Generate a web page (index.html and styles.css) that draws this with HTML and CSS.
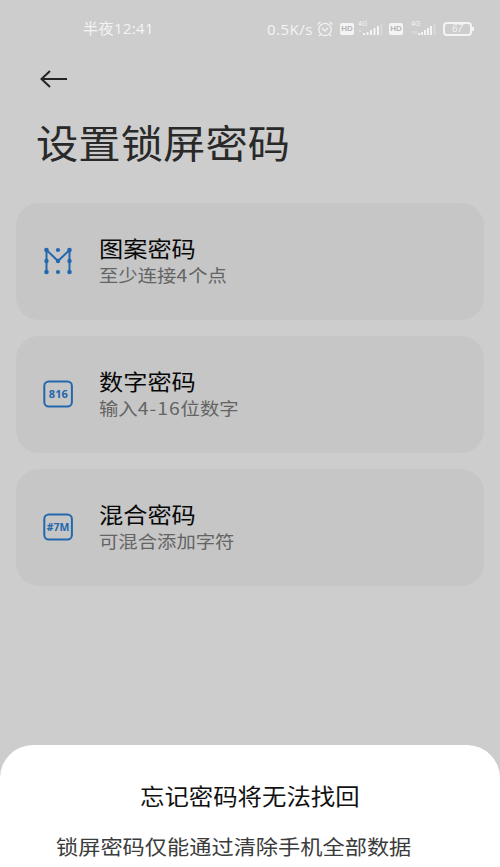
FILE: index.html
```html
<!DOCTYPE html>
<html lang="zh-CN">
<head>
<meta charset="utf-8">
<title>设置锁屏密码</title>
<link rel="stylesheet" href="styles.css">
</head>
<body>
<div class="screen">
  <header class="status">
    <span class="clock">半夜<span class="time">12:41</span></span>
    <div class="indicators">
      <span class="speed">0.5K/s</span>
      <svg class="alarm" width="18" height="18" viewBox="0 0 18 18"><circle cx="9" cy="9.5" r="6.2"/><path d="M1.5 4.5 4.5 2M16.500 4.500 13.500 2M4.500 14.500 3 16M13.500 14.500 15 16M6 8 9 11 12 8"/></svg>
      <span class="hd">HD</span>
      <svg class="signal" width="25" height="18" viewBox="0 0 25 18"><text x="0" y="6">4G</text><path d="M6 13v2M9.500 12v3M13 10v5M16.500 8v7M20 6v9"/><path class="faint" d="M2 10v2M23.500 4v11"/></svg>
      <span class="hd hd-second">HD</span>
      <svg class="signal" width="25" height="18" viewBox="0 0 25 18"><text x="0" y="6">4G</text><path d="M8 13v2M11 12v3M14 10v5M17 8v7M20 6v9"/><path class="faint" d="M2 11v3M5 11v3M23.500 4v11"/></svg>
      <span class="battery">67</span>
    </div>
  </header>
  <svg class="back" width="28" height="20" viewBox="0 0 28 20"><path d="M27 10H2M10 2 1.500 10 10 18"/></svg>
  <h1><span class="wide">设置锁屏密码</span></h1>
  <main class="options">
    <section class="card">
      <svg class="icon" width="30" height="30" viewBox="0 0 30 30"><path d="M3.500 26V4L15 15 26.500 4v22"/><g class="dots"><circle cx="3.500" cy="4" r="2.300"/><circle cx="15" cy="4" r="2.100"/><circle cx="26.500" cy="4" r="2.300"/><circle cx="3.500" cy="15" r="2.200"/><circle cx="15" cy="15" r="2.200"/><circle cx="26.500" cy="15" r="2.200"/><circle cx="3.500" cy="26" r="2.300"/><circle cx="15" cy="26" r="2.100"/><circle cx="26.500" cy="26" r="2.300"/></g></svg>
      <div class="copy"><h2><span class="wide">图案密码</span></h2><p><span class="wide">至少连接<span class="digits">4</span>个点</span></p></div>
    </section>
    <section class="card">
      <svg class="icon" width="30" height="30" viewBox="0 0 30 30"><rect x="1.300" y="2.500" width="27.600" height="25" rx="4.500"/><text x="15.300" y="19" textLength="19" lengthAdjust="spacingAndGlyphs">816</text></svg>
      <div class="copy"><h2><span class="wide">数字密码</span></h2><p><span class="wide">输入<span class="digits">4-16</span>位数字</span></p></div>
    </section>
    <section class="card">
      <svg class="icon" width="30" height="30" viewBox="0 0 30 30"><rect x="1.300" y="2.500" width="27.600" height="25" rx="4.500"/><text x="15" y="19" textLength="22.500" lengthAdjust="spacingAndGlyphs">#7M</text></svg>
      <div class="copy"><h2><span class="wide">混合密码</span></h2><p><span class="wide">可混合添加字符</span></p></div>
    </section>
  </main>
  <section class="sheet">
    <h2><span class="wide">忘记密码将无法找回</span></h2>
    <p><span class="wide">锁屏密码仅能通过清除手机全部数据</span></p>
  </section>
</div>
</body>
</html>
```
FILE: styles.css
```css
* { box-sizing: border-box; }
body, h1, h2, p { margin: 0; font-weight: 400; }
body { overflow: hidden; font-family: "Noto Sans CJK SC", sans-serif; }
.screen { width: 500px; height: 867px; background: #cdcdcd; display: flex; flex-direction: column; overflow: hidden; }
.wide { display: inline-block; white-space: nowrap; transform: scaleX(1.1); transform-origin: left center; }
.digits { letter-spacing: .9px; }
.status { flex: none; height: 58px; padding: 0 28px 2px 83px; display: flex; justify-content: space-between; align-items: center; color: #f4f4f4; }
.clock { font-size: 15px; letter-spacing: .5px; line-height: 20px; }
.time { font-family: "Open Sans", sans-serif; letter-spacing: .3px; }
.indicators { display: flex; align-items: center; padding-top: 1px; }
.speed { width: 49px; font: 15px/20px "Open Sans", sans-serif; letter-spacing: .5px; }
.alarm { margin-right: 6px; fill: none; stroke: #f4f4f4; stroke-width: 1.3; }
.hd { width: 14px; height: 12px; margin-right: 4px; border-radius: 2px; background: #f4f4f4; color: #b5b5b5; font: bold 8px/12px "Liberation Sans", sans-serif; text-align: center; }
.hd-second { margin-left: 6px; margin-right: 8px; }
.signal { fill: none; stroke: #f4f4f4; stroke-width: 2; }
.signal text { fill: #f4f4f4; stroke: none; font: 7px "Liberation Sans", sans-serif; }
.faint { opacity: .3; }
.battery { position: relative; width: 29px; height: 14px; margin-left: 7px; border: 2px solid #f4f4f4; border-radius: 4px; font: italic 10px/10px "Liberation Sans", sans-serif; text-align: center; }
.battery::after { content: ""; position: absolute; right: -4px; top: 3px; width: 2px; height: 4px; background: #f4f4f4; }
.back { flex: none; margin: 11px 0 0 40px; fill: none; stroke: #242424; stroke-width: 2; }
h1 { flex: none; height: 56px; margin: 24px 0 0 36px; font-size: 38.500px; line-height: 56px; color: #292929; }
.options { flex: none; margin: 34px 16px 0; display: flex; flex-direction: column; gap: 16px; }
.card { height: 117px; border-radius: 23px; background: #c6c6c6; display: flex; padding: 30px 0 0 27px; }
.icon { flex: none; margin-top: 13px; fill: none; stroke: #2368ae; stroke-width: 2; }
.icon .dots { stroke: none; fill: #2368ae; }
.icon text { stroke: none; fill: #2368ae; font: bold 11px "Open Sans", sans-serif; text-anchor: middle; }
.copy { margin-left: 26px; }
.copy h2 { height: 28px; font-size: 22px; line-height: 28px; color: #080808; }
.copy p { height: 26px; font-size: 17.600px; line-height: 27px; color: #646464; }
.sheet { flex: none; height: 140px; margin-top: 159px; padding: 32px 0 0; border-radius: 33px 33px 0 0; background: #fff; }
.sheet h2 { height: 36px; padding-left: 140px; font-size: 22.200px; line-height: 36px; color: #111; }
.sheet p { height: 32px; margin-top: 18px; padding-left: 56px; font-size: 20.200px; line-height: 32px; color: #3c3c3c; }
```
